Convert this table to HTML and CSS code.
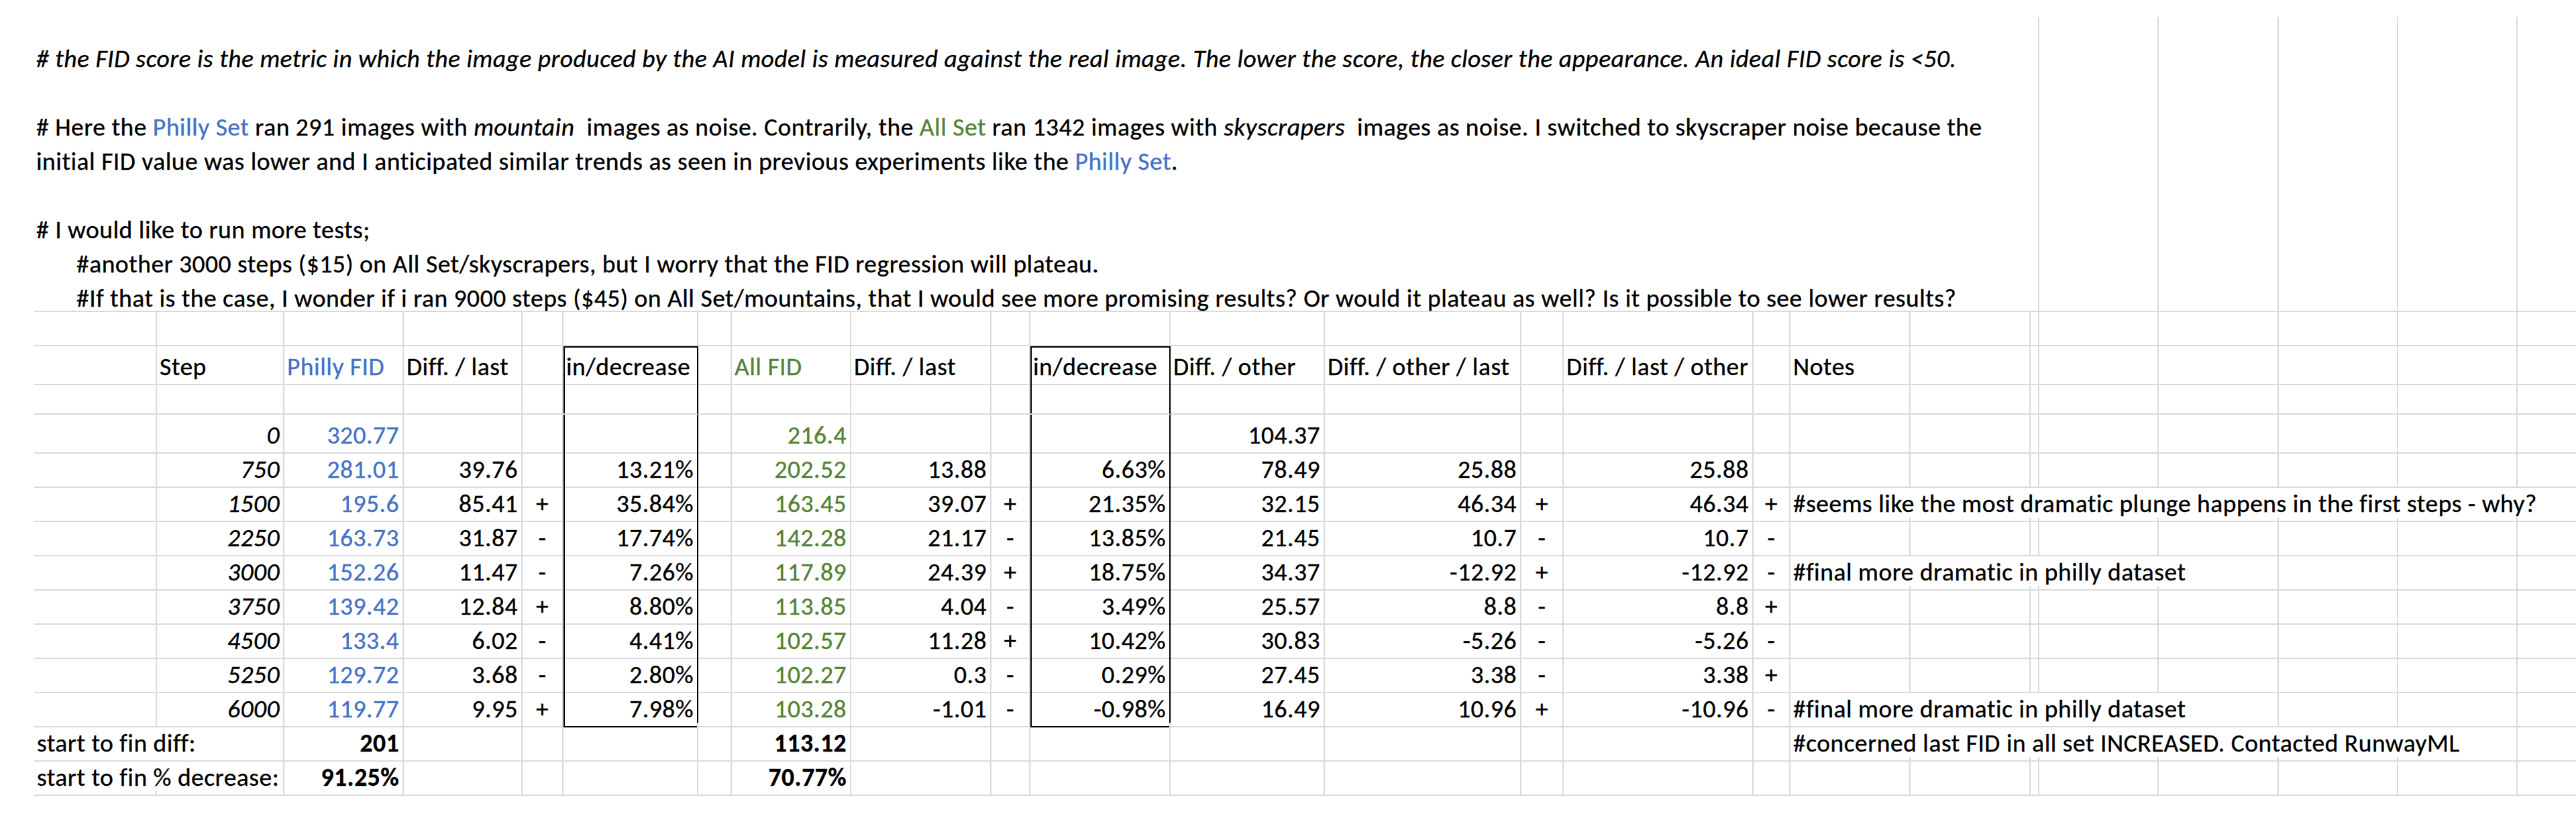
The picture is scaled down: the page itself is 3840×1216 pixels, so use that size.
FILE: index.html
```html
<!DOCTYPE html>
<html>
<head>
<meta charset="utf-8">
<title>FID experiments</title>
<link rel="stylesheet" href="styles.css">
</head>
<body>
<div class="intro">
  <div class="intro-text">
    <p class="ln it"># the FID score is the metric in which the image produced by the AI model is measured against the real image. The lower the score, the closer the appearance. An ideal FID score is &lt;50.</p>
    <p class="ln"></p>
    <p class="ln"># Here the <span class="blue">Philly Set</span> ran 291 images with <em>mountain</em>  images as noise. Contrarily, the <span class="green">All Set</span> ran 1342 images with <em>skyscrapers</em>  images as noise. I switched to skyscraper noise because the</p>
    <p class="ln">initial FID value was lower and I anticipated similar trends as seen in previous experiments like the <span class="blue">Philly Set</span>.</p>
    <p class="ln"></p>
    <p class="ln"># I would like to run more tests;</p>
    <p class="ln ind">#another 3000 steps ($15) on All Set/skyscrapers, but I worry that the FID regression will plateau.</p>
    <p class="ln ind">#If that is the case, I wonder if i ran 9000 steps ($45) on All Set/mountains, that I would see more promising results? Or would it plateau as well? Is it possible to see lower results?</p>
  </div>
  <div class="gl"></div>
  <div class="gl w179"></div>
  <div class="gl"></div>
  <div class="gl"></div>
  <div class="gl last"></div>
</div>

<div class="sheet">
  <div class="row">
    <div></div><div></div><div></div><div></div><div></div><div></div><div></div><div></div><div></div><div></div><div></div><div></div><div></div><div></div><div></div><div></div><div></div><div></div><div></div><div></div><div></div><div></div><div></div><div></div>
  </div>
  <div class="row">
    <div></div><div>Step</div><div class="blue">Philly FID</div><div>Diff. / last</div><div></div><div class="bx bt">in/decrease</div><div></div><div class="green">All FID</div><div>Diff. / last</div><div></div><div class="bx bt">in/decrease</div><div>Diff. / other</div><div>Diff. / other / last</div><div></div><div>Diff. / last / other</div><div></div><div>Notes</div><div></div><div></div><div></div><div></div><div></div><div></div><div></div>
  </div>
  <div class="row">
    <div></div><div></div><div></div><div></div><div></div><div class="bx"></div><div></div><div></div><div></div><div></div><div class="bx"></div><div></div><div></div><div></div><div></div><div></div><div></div><div></div><div></div><div></div><div></div><div></div><div></div><div></div>
  </div>
  <div class="row">
    <div></div><div class="r i">0</div><div class="r blue">320.77</div><div></div><div></div><div class="bx"></div><div></div><div class="r green">216.4</div><div></div><div></div><div class="bx"></div><div class="r">104.37</div><div></div><div></div><div></div><div></div><div></div><div></div><div></div><div></div><div></div><div></div><div></div><div></div>
  </div>
  <div class="row">
    <div></div><div class="r i">750</div><div class="r blue">281.01</div><div class="r">39.76</div><div></div><div class="bx r">13.21%</div><div></div><div class="r green">202.52</div><div class="r">13.88</div><div></div><div class="bx r">6.63%</div><div class="r">78.49</div><div class="r">25.88</div><div></div><div class="r">25.88</div><div></div><div></div><div></div><div></div><div></div><div></div><div></div><div></div><div></div>
  </div>
  <div class="row">
    <div></div><div class="r i">1500</div><div class="r blue">195.6</div><div class="r">85.41</div><div class="c">+</div><div class="bx r">35.84%</div><div></div><div class="r green">163.45</div><div class="r">39.07</div><div class="c">+</div><div class="bx r">21.35%</div><div class="r">32.15</div><div class="r">46.34</div><div class="c">+</div><div class="r">46.34</div><div class="c">+</div><div class="s8">#seems like the most dramatic plunge happens in the first steps - why?</div>
  </div>
  <div class="row">
    <div></div><div class="r i">2250</div><div class="r blue">163.73</div><div class="r">31.87</div><div class="c">-</div><div class="bx r">17.74%</div><div></div><div class="r green">142.28</div><div class="r">21.17</div><div class="c">-</div><div class="bx r">13.85%</div><div class="r">21.45</div><div class="r">10.7</div><div class="c">-</div><div class="r">10.7</div><div class="c">-</div><div></div><div></div><div></div><div></div><div></div><div></div><div></div><div></div>
  </div>
  <div class="row">
    <div></div><div class="r i">3000</div><div class="r blue">152.26</div><div class="r">11.47</div><div class="c">-</div><div class="bx r">7.26%</div><div></div><div class="r green">117.89</div><div class="r">24.39</div><div class="c">+</div><div class="bx r">18.75%</div><div class="r">34.37</div><div class="r">-12.92</div><div class="c">+</div><div class="r">-12.92</div><div class="c">-</div><div class="s5">#final more dramatic in philly dataset</div><div></div><div></div><div></div>
  </div>
  <div class="row">
    <div></div><div class="r i">3750</div><div class="r blue">139.42</div><div class="r">12.84</div><div class="c">+</div><div class="bx r">8.80%</div><div></div><div class="r green">113.85</div><div class="r">4.04</div><div class="c">-</div><div class="bx r">3.49%</div><div class="r">25.57</div><div class="r">8.8</div><div class="c">-</div><div class="r">8.8</div><div class="c">+</div><div></div><div></div><div></div><div></div><div></div><div></div><div></div><div></div>
  </div>
  <div class="row">
    <div></div><div class="r i">4500</div><div class="r blue">133.4</div><div class="r">6.02</div><div class="c">-</div><div class="bx r">4.41%</div><div></div><div class="r green">102.57</div><div class="r">11.28</div><div class="c">+</div><div class="bx r">10.42%</div><div class="r">30.83</div><div class="r">-5.26</div><div class="c">-</div><div class="r">-5.26</div><div class="c">-</div><div></div><div></div><div></div><div></div><div></div><div></div><div></div><div></div>
  </div>
  <div class="row">
    <div></div><div class="r i">5250</div><div class="r blue">129.72</div><div class="r">3.68</div><div class="c">-</div><div class="bx r">2.80%</div><div></div><div class="r green">102.27</div><div class="r">0.3</div><div class="c">-</div><div class="bx r">0.29%</div><div class="r">27.45</div><div class="r">3.38</div><div class="c">-</div><div class="r">3.38</div><div class="c">+</div><div></div><div></div><div></div><div></div><div></div><div></div><div></div><div></div>
  </div>
  <div class="row">
    <div></div><div class="r i">6000</div><div class="r blue">119.77</div><div class="r">9.95</div><div class="c">+</div><div class="bx bb r">7.98%</div><div></div><div class="r green">103.28</div><div class="r">-1.01</div><div class="c">-</div><div class="bx bb r">-0.98%</div><div class="r">16.49</div><div class="r">10.96</div><div class="c">+</div><div class="r">-10.96</div><div class="c">-</div><div class="s5">#final more dramatic in philly dataset</div><div></div><div></div><div></div>
  </div>
  <div class="row">
    <div class="s2">start to fin diff:</div><div class="r b">201</div><div></div><div></div><div></div><div></div><div class="r b">113.12</div><div></div><div></div><div></div><div></div><div></div><div></div><div></div><div></div><div class="s7">#concerned last FID in all set INCREASED. Contacted RunwayML</div><div></div>
  </div>
  <div class="row">
    <div class="s2">start to fin % decrease:</div><div class="r b">91.25%</div><div></div><div></div><div></div><div></div><div class="r b">70.77%</div><div></div><div></div><div></div><div></div><div></div><div></div><div></div><div></div><div></div><div></div><div></div><div></div><div></div><div></div><div></div><div></div>
  </div>
  <div class="row tail">
    <div></div><div></div><div></div><div></div><div></div><div></div><div></div><div></div><div></div><div></div><div></div><div></div><div></div><div></div><div></div><div></div><div></div><div></div><div></div><div></div><div></div><div></div><div></div><div></div>
  </div>
</div>
</body>
</html>
```

FILE: styles.css
```css
* { box-sizing: border-box; }

html, body { margin: 0; padding: 0; }

body {
  width: 3840px;
  height: 1216px;
  overflow: hidden;
  background: #ffffff;
  color: #000000;
  font-family: Carlito, Calibri, Lato, sans-serif;
  font-size: 37.5px;
  letter-spacing: 0.5px;
  -webkit-text-stroke: 0.35px currentColor;
  --grid: #dadada;
  --cols: 183px 190px 178px 177px 61px 201px 50px 178px 209px 58px 209px 230px 293px 63px 283px 55px 179px 179px 13px 178px 179px 178px 178px 87px;
}

/* ---- narrative block above the table ---- */
.intro {
  display: flex;
  height: 465px;
  margin-left: 51px;
  border-bottom: 2px solid var(--grid);
}

.intro-text {
  flex: none;
  width: 2987px;
  padding-top: 57px;
}

.ln {
  margin: 0;
  height: 51px;
  line-height: 51px;
  padding: 5px 0 0 3px;
  white-space: pre;
}

.ln.ind { padding-left: 63px; }

.it { font-style: italic; }

.gl {
  flex: none;
  width: 178px;
  height: 438px;
  margin-top: 25px;
  border-left: 2px solid var(--grid);
}

.gl.w179 { width: 179px; }
.gl.last { width: 89px; }

/* ---- spreadsheet grid ---- */
.sheet { margin-left: 51px; }

.row {
  display: grid;
  grid-template-columns: var(--cols);
  height: 51px;
}

.row > div {
  border-right: 2px solid var(--grid);
  border-bottom: 2px solid var(--grid);
  padding: 5px 5px 0 4px;
  line-height: 51px;
  white-space: pre;
}

.row > div:last-child { border-right: none; }

.row.tail { height: 7px; }
.row.tail > div { border-bottom: none; padding: 0; }

.row > .r { text-align: right; }
.row > .c { text-align: center; padding-left: 0; padding-right: 0; }
.i { font-style: italic; }
.b { font-weight: bold; }
.blue { color: #4472c4; }
.green { color: #548235; }

.row > .bx {
  border-right-color: #000000;
  box-shadow: inset 2px 0 0 #000000;
}
.row > .bx.bt { box-shadow: inset 2px 0 0 #000000, inset 0 2px 0 #000000; }
.row > .bx.bb { border-bottom-color: #000000; }

.s2 { grid-column: span 2; }
.s5 { grid-column: span 5; }
.s7 { grid-column: span 7; }
.s8 { grid-column: span 8; }
```
